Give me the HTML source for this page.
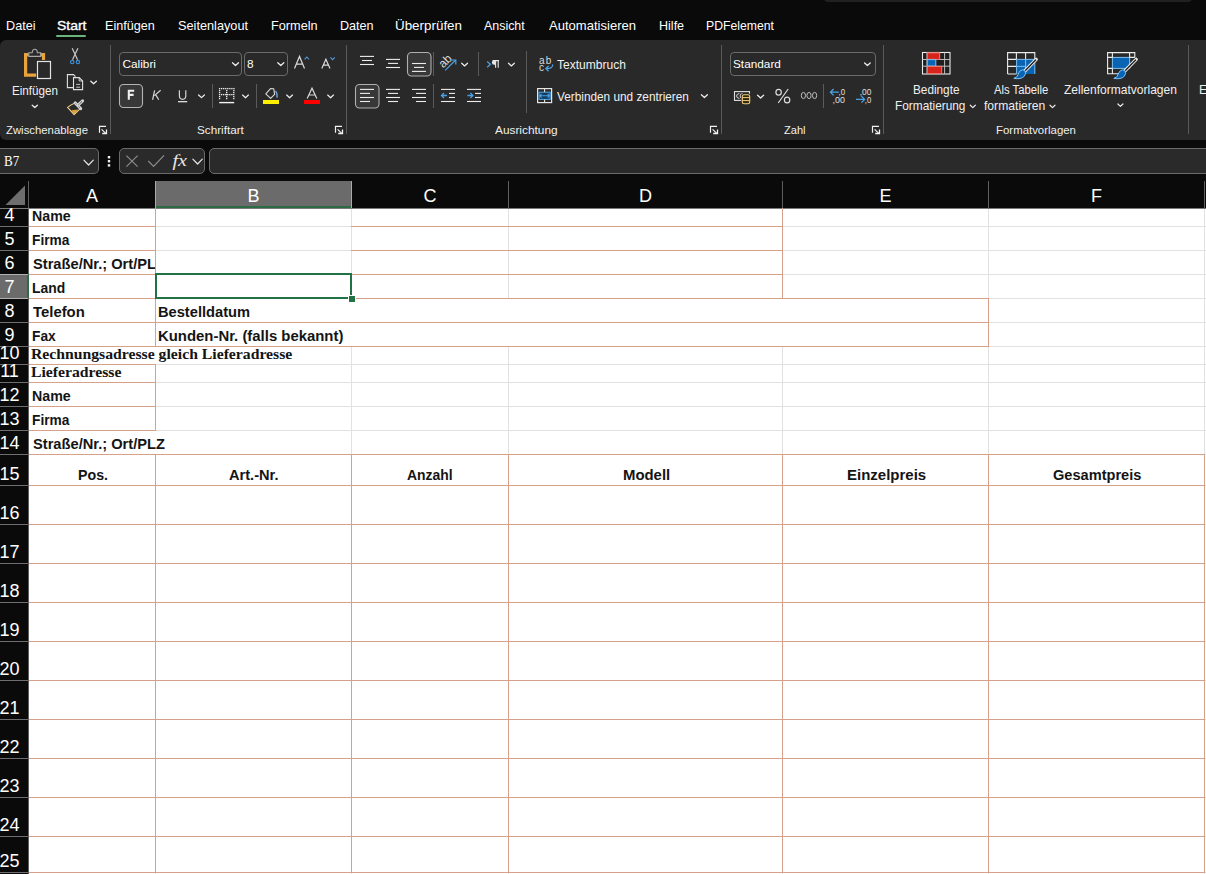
<!DOCTYPE html><html><head><meta charset="utf-8"><style>
html,body{margin:0;padding:0;}
body{width:1206px;height:874px;overflow:hidden;position:relative;background:#0a0a0a;font-family:"Liberation Sans",sans-serif;}
.t{position:absolute;white-space:nowrap;}
.r{position:absolute;}
svg.r{overflow:visible;}
</style></head><body>
<div class="r" style="left:824px;top:-10px;width:368px;height:12px;background:#212121;border-radius:4px;"></div>
<div class="t" style="left:5.50px;top:19.49px;font-size:13.00px;line-height:13.00px;color:#fff;font-family:'Liberation Sans',sans-serif;transform:scaleX(0.9720);transform-origin:0 0;">Datei</div>
<div class="t" style="left:56.50px;top:19.49px;font-size:13.00px;line-height:13.00px;color:#fff;font-family:'Liberation Sans',sans-serif;transform:scaleX(1.0745);transform-origin:0 0;-webkit-text-stroke:0.35px #fff;">Start</div>
<div class="t" style="left:105.00px;top:19.49px;font-size:13.00px;line-height:13.00px;color:#fff;font-family:'Liberation Sans',sans-serif;transform:scaleX(0.9684);transform-origin:0 0;">Einfügen</div>
<div class="t" style="left:178.00px;top:19.49px;font-size:13.00px;line-height:13.00px;color:#fff;font-family:'Liberation Sans',sans-serif;transform:scaleX(0.9783);transform-origin:0 0;">Seitenlayout</div>
<div class="t" style="left:271.00px;top:19.49px;font-size:13.00px;line-height:13.00px;color:#fff;font-family:'Liberation Sans',sans-serif;transform:scaleX(0.9774);transform-origin:0 0;">Formeln</div>
<div class="t" style="left:340.00px;top:19.49px;font-size:13.00px;line-height:13.00px;color:#fff;font-family:'Liberation Sans',sans-serif;transform:scaleX(0.9686);transform-origin:0 0;">Daten</div>
<div class="t" style="left:395.00px;top:19.49px;font-size:13.00px;line-height:13.00px;color:#fff;font-family:'Liberation Sans',sans-serif;transform:scaleX(1.0302);transform-origin:0 0;">Überprüfen</div>
<div class="t" style="left:484.00px;top:19.49px;font-size:13.00px;line-height:13.00px;color:#fff;font-family:'Liberation Sans',sans-serif;transform:scaleX(0.9547);transform-origin:0 0;">Ansicht</div>
<div class="t" style="left:549.00px;top:19.49px;font-size:13.00px;line-height:13.00px;color:#fff;font-family:'Liberation Sans',sans-serif;transform:scaleX(1.0033);transform-origin:0 0;">Automatisieren</div>
<div class="t" style="left:658.60px;top:19.49px;font-size:13.00px;line-height:13.00px;color:#fff;font-family:'Liberation Sans',sans-serif;transform:scaleX(0.9651);transform-origin:0 0;">Hilfe</div>
<div class="t" style="left:706.40px;top:19.49px;font-size:13.00px;line-height:13.00px;color:#fff;font-family:'Liberation Sans',sans-serif;transform:scaleX(0.9398);transform-origin:0 0;">PDFelement</div>
<div class="r" style="left:56px;top:35px;width:30px;height:2px;background:#6bb37f;border-radius:1px;"></div>
<div class="r" style="left:0px;top:40px;width:1206px;height:100px;background:#292929;border-radius:6px 0 0 6px;"></div>
<div class="r" style="left:110px;top:45px;width:1px;height:89px;background:#5a5a5a;"></div>
<div class="r" style="left:346px;top:45px;width:1px;height:89px;background:#5a5a5a;"></div>
<div class="r" style="left:721px;top:45px;width:1px;height:89px;background:#5a5a5a;"></div>
<div class="r" style="left:883px;top:45px;width:1px;height:89px;background:#5a5a5a;"></div>
<div class="r" style="left:1188px;top:45px;width:1px;height:89px;background:#5a5a5a;"></div>
<div class="t" style="left:6.00px;top:124.28px;font-size:11.60px;line-height:11.60px;color:#f0f0f0;font-family:'Liberation Sans',sans-serif;transform:scaleX(0.9782);transform-origin:0 0;">Zwischenablage</div>
<div class="t" style="left:197.00px;top:124.28px;font-size:11.60px;line-height:11.60px;color:#f0f0f0;font-family:'Liberation Sans',sans-serif;transform:scaleX(1.0084);transform-origin:0 0;">Schriftart</div>
<div class="t" style="left:494.90px;top:124.28px;font-size:11.60px;line-height:11.60px;color:#f0f0f0;font-family:'Liberation Sans',sans-serif;transform:scaleX(1.0219);transform-origin:0 0;">Ausrichtung</div>
<div class="t" style="left:784.00px;top:124.28px;font-size:11.60px;line-height:11.60px;color:#f0f0f0;font-family:'Liberation Sans',sans-serif;transform:scaleX(0.9572);transform-origin:0 0;">Zahl</div>
<div class="t" style="left:996.40px;top:124.28px;font-size:11.60px;line-height:11.60px;color:#f0f0f0;font-family:'Liberation Sans',sans-serif;transform:scaleX(0.9848);transform-origin:0 0;">Formatvorlagen</div>
<div class="r" style="left:119px;top:52px;width:121px;height:22px;background:transparent;border:1px solid #6a6a6a;border-radius:4px;"></div>
<div class="t" style="left:122.50px;top:58.51px;font-size:11.80px;line-height:11.80px;color:#fff;font-family:'Liberation Sans',sans-serif;">Calibri</div>
<div class="r" style="left:244px;top:52px;width:42px;height:22px;background:transparent;border:1px solid #6a6a6a;border-radius:4px;"></div>
<div class="t" style="left:247.00px;top:58.51px;font-size:11.80px;line-height:11.80px;color:#fff;font-family:'Liberation Sans',sans-serif;">8</div>
<div class="r" style="left:730px;top:52px;width:144px;height:22px;background:transparent;border:1px solid #6a6a6a;border-radius:4px;"></div>
<div class="t" style="left:733.00px;top:58.51px;font-size:11.80px;line-height:11.80px;color:#fff;font-family:'Liberation Sans',sans-serif;">Standard</div>
<div class="t" style="left:557.00px;top:58.70px;font-size:12.40px;line-height:12.40px;color:#f0f0f0;font-family:'Liberation Sans',sans-serif;transform:scaleX(0.9720);transform-origin:0 0;">Textumbruch</div>
<div class="t" style="left:557.00px;top:91.00px;font-size:12.40px;line-height:12.40px;color:#f0f0f0;font-family:'Liberation Sans',sans-serif;transform:scaleX(0.9526);transform-origin:0 0;">Verbinden und zentrieren</div>
<div class="t" style="left:11.50px;top:85.00px;font-size:12.40px;line-height:12.40px;color:#f0f0f0;font-family:'Liberation Sans',sans-serif;transform:scaleX(0.9397);transform-origin:0 0;">Einfügen</div>
<div class="t" style="left:912.60px;top:84.30px;font-size:12.40px;line-height:12.40px;color:#f0f0f0;font-family:'Liberation Sans',sans-serif;transform:scaleX(0.9499);transform-origin:0 0;">Bedingte</div>
<div class="t" style="left:894.90px;top:99.80px;font-size:12.40px;line-height:12.40px;color:#f0f0f0;font-family:'Liberation Sans',sans-serif;transform:scaleX(0.9561);transform-origin:0 0;">Formatierung</div>
<div class="t" style="left:993.60px;top:84.30px;font-size:12.40px;line-height:12.40px;color:#f0f0f0;font-family:'Liberation Sans',sans-serif;transform:scaleX(0.9089);transform-origin:0 0;">Als Tabelle</div>
<div class="t" style="left:984.40px;top:99.80px;font-size:12.40px;line-height:12.40px;color:#f0f0f0;font-family:'Liberation Sans',sans-serif;transform:scaleX(0.9790);transform-origin:0 0;">formatieren</div>
<div class="t" style="left:1064.00px;top:84.30px;font-size:12.40px;line-height:12.40px;color:#f0f0f0;font-family:'Liberation Sans',sans-serif;transform:scaleX(0.9701);transform-origin:0 0;">Zellenformatvorlagen</div>
<div class="t" style="left:1199.00px;top:84.30px;font-size:12.40px;line-height:12.40px;color:#f0f0f0;font-family:'Liberation Sans',sans-serif;">E</div>
<div class="r" style="left:0px;top:148px;width:99px;height:25px;background:#2a2a2a;border:1px solid #6a6a6a;border-left:none;border-radius:0 5px 5px 0;box-sizing:border-box;height:26px;"></div>
<div class="t" style="left:3.90px;top:152.80px;font-size:15.40px;line-height:15.40px;color:#fff;font-family:'Liberation Serif',serif;transform:scaleX(0.8458);transform-origin:0 0;">B7</div>
<div class="r" style="left:119px;top:148px;width:86px;height:26px;background:#2a2a2a;border:1px solid #6a6a6a;border-radius:5px;box-sizing:border-box;"></div>
<div class="r" style="left:209px;top:148px;width:1010px;height:26px;background:#2a2a2a;border:1px solid #6a6a6a;border-radius:5px;box-sizing:border-box;"></div>
<svg class="r" style="left:0px;top:0px" width="1206" height="874" viewBox="0 0 1206 874"><g transform="translate(20,44)"><path d="M8.6 10.6 H5.6 V31.2 H16.2" fill="none" stroke="#e9a33b" stroke-width="3.2"/><path d="M20.3 10.6 H23.5 V16" fill="none" stroke="#e9a33b" stroke-width="3.2"/><path d="M8.8 8.8 H12.2 Q12.4 5.3 14.8 5.3 Q17.2 5.3 17.4 8.8 H20.7 V12.4 H8.8 Z" fill="#292929" stroke="#a8a8a8" stroke-width="1.1"/><rect x="17.5" y="17.5" width="13" height="17" fill="#292929" stroke="#e4e4e4" stroke-width="1.2"/></g><path d="M32.20 105.20 L34.80 107.60 L37.40 105.20" fill="none" stroke="#ececec" stroke-width="1.30" stroke-linecap="round" stroke-linejoin="round"/><path d="M72.2 48.3 L77.6 59.8 M77.9 48.3 L72.5 59.8" stroke="#c8c8c8" stroke-width="1.2" fill="none"/><circle cx="72.2" cy="62" r="1.7" fill="none" stroke="#3d8fd6" stroke-width="1.15"/><circle cx="77.9" cy="62" r="1.7" fill="none" stroke="#3d8fd6" stroke-width="1.15"/><path d="M73 87.6 H67.4 V74.6 H73.5 L75.5 76.6" fill="none" stroke="#e0e0e0" stroke-width="1.1"/><path d="M73.5 77.6 H79.2 L82.6 81 V89.6 H73.5 Z" fill="#292929" stroke="#e0e0e0" stroke-width="1.1"/><path d="M79.2 77.6 V81 H82.6" fill="none" stroke="#e0e0e0" stroke-width="0.9"/><path d="M76.2 84.4 H80.2 M76.2 87.2 H80.2" stroke="#d8d8d8" stroke-width="0.9"/><path d="M90.80 81.20 L93.60 83.80 L96.40 81.20" fill="none" stroke="#ececec" stroke-width="1.30" stroke-linecap="round" stroke-linejoin="round"/><g transform="translate(62,96)"><path d="M9.3 14.3 L16.3 13.6 L12.2 18.2 Z" fill="#e2a134"/><path d="M5.6 11.3 Q9 8.4 13 6.9 L18.3 12.6 L12.1 18.7 Z" fill="none" stroke="#f3d38a" stroke-width="1.1" stroke-linejoin="round"/><path d="M13.3 7 L18.6 12.5" stroke="#d4d4d4" stroke-width="3.2" stroke-linecap="round"/><path d="M13.8 7.6 L18 12" stroke="#2a2a2a" stroke-width="1" stroke-dasharray="1.1 0.7"/><path d="M16 9.2 L20.6 4.8" stroke="#d4d4d4" stroke-width="3" stroke-linecap="round"/><path d="M16.6 8.6 L20.1 5.3" stroke="#2a2a2a" stroke-width="1" stroke-dasharray="1.1 0.7"/></g><path d="M99.5 132.8 V126.3 H106" fill="none" stroke="#f2f2f2" stroke-width="1.2"/><path d="M101.6 129.4 L106 133.6" stroke="#f2f2f2" stroke-width="1.2"/><path d="M106.5 129.6 V133.5 H102.2" fill="none" stroke="#f2f2f2" stroke-width="1.3"/><path d="M232.50 62.80 L235.50 65.60 L238.50 62.80" fill="none" stroke="#ececec" stroke-width="1.30" stroke-linecap="round" stroke-linejoin="round"/><path d="M277.80 62.80 L280.80 65.60 L283.80 62.80" fill="none" stroke="#ececec" stroke-width="1.30" stroke-linecap="round" stroke-linejoin="round"/><path d="M294.5 68.6 L299.5 56.4 L304.5 68.6 M296.4 64.2 H302.6" fill="none" stroke="#dadada" stroke-width="1.2"/><path d="M304.6 59.4 L306.8 57 L309 59.4" fill="none" stroke="#4f9ad8" stroke-width="1.1"/><path d="M321.8 68.6 L325.9 59.2 L330 68.6 M323.4 65.2 H328.4" fill="none" stroke="#dadada" stroke-width="1.2"/><path d="M330.4 57.3 L332.6 59.6 L334.8 57.3" fill="none" stroke="#4f9ad8" stroke-width="1.1"/><rect x="119.5" y="84.5" width="23" height="23" rx="4" fill="#383838" stroke="#b4b4b4" stroke-width="1.1"/><path d="M128.8 99.8 V90.8 H134.2 M128.8 94.9 H133.6" fill="none" stroke="#f0f0f0" stroke-width="2.1"/><path d="M154.6 90.3 L152.6 99.8 M160.6 90.3 L154.4 95.6 M155.6 94.6 L158.8 99.8" fill="none" stroke="#d8d8d8" stroke-width="1.2"/><path d="M179.4 90.2 V95.8 Q179.4 99.3 182.6 99.3 Q185.8 99.3 185.8 95.8 V90.2" fill="none" stroke="#d4d4d4" stroke-width="1.2"/><path d="M178 101.7 H187.2" stroke="#f0f0f0" stroke-width="1.2"/><path d="M198.60 94.95 L201.50 97.65 L204.40 94.95" fill="none" stroke="#ececec" stroke-width="1.25" stroke-linecap="round" stroke-linejoin="round"/><rect x="212" y="84" width="1" height="24" fill="#5a5a5a"/><rect x="218.95" y="87.95" width="1.3" height="1.3" fill="#f0f0f0"/><rect x="221.00" y="87.95" width="1.3" height="1.3" fill="#f0f0f0"/><rect x="223.05" y="87.95" width="1.3" height="1.3" fill="#f0f0f0"/><rect x="225.10" y="87.95" width="1.3" height="1.3" fill="#f0f0f0"/><rect x="227.15" y="87.95" width="1.3" height="1.3" fill="#f0f0f0"/><rect x="229.20" y="87.95" width="1.3" height="1.3" fill="#f0f0f0"/><rect x="231.25" y="87.95" width="1.3" height="1.3" fill="#f0f0f0"/><rect x="233.30" y="87.95" width="1.3" height="1.3" fill="#f0f0f0"/><rect x="218.95" y="89.95" width="1.3" height="1.3" fill="#f0f0f0"/><rect x="233.15" y="89.95" width="1.3" height="1.3" fill="#f0f0f0"/><rect x="226.05" y="89.95" width="1.3" height="1.3" fill="#f0f0f0"/><rect x="218.95" y="91.95" width="1.3" height="1.3" fill="#f0f0f0"/><rect x="233.15" y="91.95" width="1.3" height="1.3" fill="#f0f0f0"/><rect x="226.05" y="91.95" width="1.3" height="1.3" fill="#f0f0f0"/><rect x="218.95" y="93.95" width="1.3" height="1.3" fill="#f0f0f0"/><rect x="233.15" y="93.95" width="1.3" height="1.3" fill="#f0f0f0"/><rect x="226.05" y="93.95" width="1.3" height="1.3" fill="#f0f0f0"/><rect x="218.95" y="95.95" width="1.3" height="1.3" fill="#f0f0f0"/><rect x="233.15" y="95.95" width="1.3" height="1.3" fill="#f0f0f0"/><rect x="226.05" y="95.95" width="1.3" height="1.3" fill="#f0f0f0"/><rect x="218.95" y="97.95" width="1.3" height="1.3" fill="#f0f0f0"/><rect x="233.15" y="97.95" width="1.3" height="1.3" fill="#f0f0f0"/><rect x="226.05" y="97.95" width="1.3" height="1.3" fill="#f0f0f0"/><rect x="221.00" y="93.95" width="1.3" height="1.3" fill="#f0f0f0"/><rect x="223.05" y="93.95" width="1.3" height="1.3" fill="#f0f0f0"/><rect x="225.10" y="93.95" width="1.3" height="1.3" fill="#f0f0f0"/><rect x="227.15" y="93.95" width="1.3" height="1.3" fill="#f0f0f0"/><rect x="229.20" y="93.95" width="1.3" height="1.3" fill="#f0f0f0"/><rect x="231.25" y="93.95" width="1.3" height="1.3" fill="#f0f0f0"/><path d="M219.2 102.6 H234.2" stroke="#f2f2f2" stroke-width="1.4"/><path d="M242.60 95.05 L245.50 97.75 L248.40 95.05" fill="none" stroke="#ececec" stroke-width="1.25" stroke-linecap="round" stroke-linejoin="round"/><rect x="256" y="84" width="1" height="24" fill="#5a5a5a"/><path d="M265.8 93.8 L270.5 88.6 L273.8 88.8 L274.6 94.4 L270.6 98.4 Z" fill="none" stroke="#d8d8d8" stroke-width="1.1" stroke-linejoin="round"/><path d="M275.4 91 Q277.4 92.6 277 97.6" fill="none" stroke="#6fa8d8" stroke-width="1.5"/><rect x="263" y="100" width="16" height="4" fill="#ffee00"/><path d="M286.70 95.05 L289.60 97.75 L292.50 95.05" fill="none" stroke="#ececec" stroke-width="1.25" stroke-linecap="round" stroke-linejoin="round"/><path d="M307.2 98.6 L312 88.2 L316.8 98.6 M308.8 95 H315.2" fill="none" stroke="#dadada" stroke-width="1.2"/><rect x="304" y="100" width="16" height="4" fill="#ff0000"/><path d="M327.70 95.05 L330.60 97.75 L333.50 95.05" fill="none" stroke="#ececec" stroke-width="1.25" stroke-linecap="round" stroke-linejoin="round"/><path d="M335.5 132.8 V126.3 H342" fill="none" stroke="#f2f2f2" stroke-width="1.2"/><path d="M337.6 129.4 L342 133.6" stroke="#f2f2f2" stroke-width="1.2"/><path d="M342.5 129.6 V133.5 H338.2" fill="none" stroke="#f2f2f2" stroke-width="1.3"/><path d="M360.00 56.40 H374.00" stroke="#ececec" stroke-width="1.10"/><path d="M362.00 60.50 H372.00" stroke="#ececec" stroke-width="1.10"/><path d="M360.00 64.50 H374.00" stroke="#ececec" stroke-width="1.10"/><path d="M386.00 59.40 H400.00" stroke="#ececec" stroke-width="1.10"/><path d="M388.00 63.40 H398.00" stroke="#ececec" stroke-width="1.10"/><path d="M386.00 67.50 H400.00" stroke="#ececec" stroke-width="1.10"/><rect x="407.5" y="52.5" width="23.5" height="23.5" rx="4" fill="#383838" stroke="#b0b0b0" stroke-width="1.1"/><path d="M412.00 63.50 H426.00" stroke="#ececec" stroke-width="1.10"/><path d="M414.00 67.40 H424.00" stroke="#ececec" stroke-width="1.10"/><path d="M412.00 71.40 H426.00" stroke="#ececec" stroke-width="1.10"/><rect x="433" y="52" width="1" height="24" fill="#5a5a5a"/><text x="0" y="0" transform="translate(443.2,68.6) rotate(-45)" font-family="Liberation Sans" font-size="12" fill="#dcdcdc">ab</text><path d="M445.2 70.4 L455.6 60" stroke="#4ba0e4" stroke-width="1.2"/><path d="M451.2 60 H455.8 V64.6" fill="none" stroke="#4ba0e4" stroke-width="1.2"/><path d="M461.70 63.25 L464.60 65.95 L467.50 63.25" fill="none" stroke="#ececec" stroke-width="1.25" stroke-linecap="round" stroke-linejoin="round"/><rect x="478" y="52" width="1" height="24" fill="#5a5a5a"/><path d="M487.2 61.4 L490.4 64.3 L487.2 67.2" fill="none" stroke="#4ba0e4" stroke-width="1.3"/><path d="M495.6 60.4 V67.8 M498.2 60.4 V67.8 M492.6 60.6 H499" stroke="#e6e6e6" stroke-width="1.1"/><path d="M495.6 60.2 H494.2 A2.3 2.3 0 0 0 494.2 64.8 H495.6 Z" fill="#e6e6e6"/><path d="M508.50 63.25 L511.40 65.95 L514.30 63.25" fill="none" stroke="#ececec" stroke-width="1.25" stroke-linecap="round" stroke-linejoin="round"/><rect x="355.5" y="84.5" width="23.5" height="23.5" rx="4" fill="#383838" stroke="#b0b0b0" stroke-width="1.1"/><path d="M360.00 89.40 H374.00" stroke="#ececec" stroke-width="1.10"/><path d="M360.00 93.40 H370.00" stroke="#ececec" stroke-width="1.10"/><path d="M360.00 97.50 H374.00" stroke="#ececec" stroke-width="1.10"/><path d="M360.00 101.50 H370.00" stroke="#ececec" stroke-width="1.10"/><path d="M386.00 89.40 H400.00" stroke="#ececec" stroke-width="1.10"/><path d="M388.00 93.40 H398.00" stroke="#ececec" stroke-width="1.10"/><path d="M386.00 97.50 H400.00" stroke="#ececec" stroke-width="1.10"/><path d="M388.00 101.50 H398.00" stroke="#ececec" stroke-width="1.10"/><path d="M412.00 89.40 H426.00" stroke="#ececec" stroke-width="1.10"/><path d="M416.00 93.40 H426.00" stroke="#ececec" stroke-width="1.10"/><path d="M412.00 97.50 H426.00" stroke="#ececec" stroke-width="1.10"/><path d="M416.00 101.50 H426.00" stroke="#ececec" stroke-width="1.10"/><rect x="433" y="84" width="1" height="24" fill="#5a5a5a"/><path d="M441.00 89.40 H455.00" stroke="#ececec" stroke-width="1.10"/><path d="M441.00 101.50 H455.00" stroke="#ececec" stroke-width="1.10"/><path d="M449.00 93.40 H455.00" stroke="#ececec" stroke-width="1.10"/><path d="M449.00 97.50 H455.00" stroke="#ececec" stroke-width="1.10"/><path d="M447 95.5 H441.6 M444 93 L441.5 95.5 L444 98" fill="none" stroke="#4ba0e4" stroke-width="1.3"/><path d="M467.00 89.40 H481.00" stroke="#ececec" stroke-width="1.10"/><path d="M467.00 101.50 H481.00" stroke="#ececec" stroke-width="1.10"/><path d="M475.00 93.40 H481.00" stroke="#ececec" stroke-width="1.10"/><path d="M475.00 97.50 H481.00" stroke="#ececec" stroke-width="1.10"/><path d="M467.4 95.5 H472.8 M470.4 93 L472.9 95.5 L470.4 98" fill="none" stroke="#4ba0e4" stroke-width="1.3"/><rect x="526" y="51" width="1" height="62" fill="#5a5a5a"/><text x="539" y="63.8" font-family="Liberation Sans" font-size="10" fill="#dcdcdc" textLength="12.2" lengthAdjust="spacing">ab</text><text x="539" y="71" font-family="Liberation Sans" font-size="10" fill="#dcdcdc">c</text><path d="M552.6 64.4 Q553.4 68.4 546.4 68.6" fill="none" stroke="#4ba0e4" stroke-width="1.3"/><path d="M548.6 66 L545.8 68.6 L548.6 71.2" fill="none" stroke="#4ba0e4" stroke-width="1.3"/><rect x="537.6" y="88.6" width="14" height="14" fill="none" stroke="#e4e4e4" stroke-width="1.2"/><rect x="539" y="92.2" width="11.2" height="7.2" fill="#123b5c" stroke="#4ba0e4" stroke-width="1.1"/><path d="M544.6 88.6 V92 M544.6 99.6 V102.6" stroke="#e4e4e4" stroke-width="1.1"/><path d="M539.6 95.8 H549.6 M541.6 93.9 L539.6 95.8 L541.6 97.7 M547.6 93.9 L549.6 95.8 L547.6 97.7" fill="none" stroke="#4ba0e4" stroke-width="1.1"/><path d="M701.40 94.80 L704.40 97.60 L707.40 94.80" fill="none" stroke="#ececec" stroke-width="1.30" stroke-linecap="round" stroke-linejoin="round"/><path d="M710.5 132.8 V126.3 H717" fill="none" stroke="#f2f2f2" stroke-width="1.2"/><path d="M712.6 129.4 L717 133.6" stroke="#f2f2f2" stroke-width="1.2"/><path d="M717.5 129.6 V133.5 H713.2" fill="none" stroke="#f2f2f2" stroke-width="1.3"/><path d="M864.60 62.90 L867.40 65.50 L870.20 62.90" fill="none" stroke="#ececec" stroke-width="1.30" stroke-linecap="round" stroke-linejoin="round"/><rect x="734.5" y="91.6" width="15" height="8.8" fill="none" stroke="#e0e0e0" stroke-width="1.1"/><path d="M739.4 93.6 Q736.6 93.8 736.6 96 Q736.6 98.3 739.4 98.4 M742.6 93.6 Q740 93.8 740 96 Q740 98.3 742.6 98.4" fill="none" stroke="#e0e0e0" stroke-width="1"/><rect x="741.2" y="93.6" width="9.6" height="11.2" rx="2" fill="#292929"/><rect x="742.3" y="94.7" width="7.4" height="9" rx="1.8" fill="#2e2612" stroke="#f2cf78" stroke-width="1.1"/><path d="M742.6 97.6 H749.4 M742.6 100.6 H749.4" stroke="#f2cf78" stroke-width="1"/><path d="M757.60 95.20 L760.60 98.00 L763.60 95.20" fill="none" stroke="#ececec" stroke-width="1.30" stroke-linecap="round" stroke-linejoin="round"/><ellipse cx="778.6" cy="92.3" rx="2.7" ry="2.9" fill="none" stroke="#dcdcdc" stroke-width="1.2"/><ellipse cx="787.1" cy="100" rx="2.7" ry="2.9" fill="none" stroke="#dcdcdc" stroke-width="1.2"/><path d="M778.2 103 L788.2 89" stroke="#dcdcdc" stroke-width="1.2"/><ellipse cx="803.4" cy="95.5" rx="2.1" ry="3.1" fill="none" stroke="#bdbdbd" stroke-width="1"/><ellipse cx="809" cy="95.5" rx="2.1" ry="3.1" fill="none" stroke="#bdbdbd" stroke-width="1"/><ellipse cx="814.6" cy="95.5" rx="2.1" ry="3.1" fill="none" stroke="#bdbdbd" stroke-width="1"/><rect x="823" y="84" width="1" height="24" fill="#5a5a5a"/><path d="M838.8 92.2 H830.4 M833.6 89 L830.4 92.2 L833.6 95.4" fill="none" stroke="#4ba0e4" stroke-width="1.3"/><text x="838.6" y="95.2" font-family="Liberation Sans" font-size="9.6" fill="#e0e0e0" textLength="6.6" lengthAdjust="spacingAndGlyphs">,0</text><text x="832.6" y="103.2" font-family="Liberation Sans" font-size="9.6" fill="#e0e0e0" textLength="12.4" lengthAdjust="spacingAndGlyphs">,00</text><text x="859.8" y="95.2" font-family="Liberation Sans" font-size="9.6" fill="#e0e0e0" textLength="11.6" lengthAdjust="spacingAndGlyphs">,00</text><path d="M856 99.4 H864.6 M861.4 96.2 L864.6 99.4 L861.4 102.6" fill="none" stroke="#4ba0e4" stroke-width="1.3"/><text x="864.8" y="103.2" font-family="Liberation Sans" font-size="9.6" fill="#e0e0e0" textLength="6.4" lengthAdjust="spacingAndGlyphs">,0</text><path d="M872.5 132.8 V126.3 H879" fill="none" stroke="#f2f2f2" stroke-width="1.2"/><path d="M874.6 129.4 L879 133.6" stroke="#f2f2f2" stroke-width="1.2"/><path d="M879.5 129.6 V133.5 H875.2" fill="none" stroke="#f2f2f2" stroke-width="1.3"/><g transform="translate(922,52)"><rect x="0.5" y="0.5" width="27.5" height="21.5" fill="#1f1f1f" stroke="#ececec" stroke-width="1.1"/><path d="M5 0.5 V22 M22.6 0.5 V22 M0.5 7.5 H28 M0.5 14.2 H28" stroke="#bdbdbd" stroke-width="1"/><rect x="5.3" y="0.8" width="12.4" height="6.6" fill="#d7241a" stroke="#f07a72" stroke-width="1"/><rect x="5.3" y="7.6" width="8.5" height="6.4" fill="#0a64b4" stroke="#7cc0f4" stroke-width="1"/><rect x="5.3" y="14.4" width="14.4" height="7.2" fill="#d7241a" stroke="#f07a72" stroke-width="1"/></g><path d="M970.30 105.20 L972.80 107.60 L975.30 105.20" fill="none" stroke="#ececec" stroke-width="1.20" stroke-linecap="round" stroke-linejoin="round"/><path d="M1050.00 105.20 L1052.50 107.60 L1055.00 105.20" fill="none" stroke="#ececec" stroke-width="1.20" stroke-linecap="round" stroke-linejoin="round"/><g transform="translate(1007,52)"><rect x="9.6" y="7.4" width="18.2" height="14.6" fill="#0a64b4"/><path d="M0.6 22 V0.6 H27.8 V7.4 M0.6 7.4 H9.6 M0.6 14.4 H9.6 M9.4 0.6 V7.4 M18.6 0.6 V7.4 M0.6 22 H9.6" fill="none" stroke="#ececec" stroke-width="1.1"/><path d="M9.6 7.4 V22 M18.6 7.4 V22 M9.6 7.4 H27.8 V22 M9.6 14.4 H18.6" fill="none" stroke="#7cc0f4" stroke-width="1"/></g><g transform="translate(1007,52)"><path d="M29.2 7.4 L18 18.8" stroke="#e8e8e8" stroke-width="3.4" stroke-linecap="round"/><path d="M28.6 8 L18.6 18.2" stroke="#1e1e1e" stroke-width="1.3" stroke-linecap="round"/><path d="M17.8 18.6 Q19.8 21.2 17.2 24.4 Q13.8 27.6 6.8 26.4 Q10.6 25.2 11.2 22.2 Q12 18.6 15.4 17.8 Z" fill="#0a64b4" stroke="#7cc0f4" stroke-width="1"/></g><g transform="translate(1107,52)"><rect x="5.4" y="5.4" width="17.2" height="11" fill="#0a64b4" stroke="#7cc0f4" stroke-width="1"/><path d="M14 21.8 H0.6 V0.6 H27.8 V5.4 M0.6 5.4 H5.4 M22.6 5.4 H27.8 M5.4 0.6 V5.4 M22.6 0.6 V5.4 M0.6 16.4 H5.4 M5.4 16.4 V21.8" fill="none" stroke="#ececec" stroke-width="1.1"/></g><g transform="translate(1107,52)"><path d="M29.2 7.4 L18 18.8" stroke="#e8e8e8" stroke-width="3.4" stroke-linecap="round"/><path d="M28.6 8 L18.6 18.2" stroke="#1e1e1e" stroke-width="1.3" stroke-linecap="round"/><path d="M17.8 18.6 Q19.8 21.2 17.2 24.4 Q13.8 27.6 6.8 26.4 Q10.6 25.2 11.2 22.2 Q12 18.6 15.4 17.8 Z" fill="#0a64b4" stroke="#7cc0f4" stroke-width="1"/></g><path d="M1117.90 104.00 L1120.40 106.40 L1122.90 104.00" fill="none" stroke="#ececec" stroke-width="1.20" stroke-linecap="round" stroke-linejoin="round"/><path d="M83.90 160.20 L88.60 165.00 L93.30 160.20" fill="none" stroke="#e6e6e6" stroke-width="1.20" stroke-linecap="round" stroke-linejoin="round"/><rect x="107.8" y="156.0" width="2.4" height="2.4" fill="#f0f0f0"/><rect x="107.8" y="160.0" width="2.4" height="2.4" fill="#f0f0f0"/><rect x="107.8" y="164.2" width="2.4" height="2.4" fill="#f0f0f0"/><path d="M126.4 155.6 L137.6 166.6 M137.6 155.6 L126.4 166.6" stroke="#8c8c8c" stroke-width="1.2"/><path d="M148.2 161 L153.6 166.4 L164 155.4" fill="none" stroke="#8c8c8c" stroke-width="1.2"/><text x="172.4" y="166" font-family="Liberation Serif" font-style="italic" font-size="17" fill="#e8e8e8" textLength="14.6" lengthAdjust="spacingAndGlyphs">fx</text><path d="M192.90 159.20 L197.60 164.00 L202.30 159.20" fill="none" stroke="#e6e6e6" stroke-width="1.20" stroke-linecap="round" stroke-linejoin="round"/></svg>
<div class="r" style="left:0px;top:181px;width:1206px;height:27px;background:#0a0a0a;"></div>
<div class="r" style="left:156px;top:181px;width:195px;height:27px;background:#6b6b6b;"></div>
<div class="r" style="left:155px;top:181px;width:1px;height:27px;background:#aaaaaa;"></div>
<div class="r" style="left:351px;top:181px;width:1px;height:27px;background:#aaaaaa;"></div>
<div class="r" style="left:156px;top:206px;width:195px;height:2px;background:#2d6b45;"></div>
<div class="r" style="left:28px;top:181px;width:1px;height:27px;background:#5e5e5e;"></div>
<div class="r" style="left:508px;top:181px;width:1px;height:27px;background:#5e5e5e;"></div>
<div class="r" style="left:782px;top:181px;width:1px;height:27px;background:#5e5e5e;"></div>
<div class="r" style="left:988px;top:181px;width:1px;height:27px;background:#5e5e5e;"></div>
<div class="r" style="left:1204px;top:181px;width:1px;height:27px;background:#5e5e5e;"></div>
<div class="r" style="left:0px;top:208px;width:1206px;height:1px;background:#7a7a7a;"></div>
<div class="t" style="left:86.00px;top:187.26px;font-size:18.00px;line-height:18.00px;color:#fff;font-family:'Liberation Sans',sans-serif;">A</div>
<div class="t" style="left:247.50px;top:187.26px;font-size:18.00px;line-height:18.00px;color:#fff;font-family:'Liberation Sans',sans-serif;">B</div>
<div class="t" style="left:423.50px;top:187.26px;font-size:18.00px;line-height:18.00px;color:#fff;font-family:'Liberation Sans',sans-serif;">C</div>
<div class="t" style="left:639.00px;top:187.26px;font-size:18.00px;line-height:18.00px;color:#fff;font-family:'Liberation Sans',sans-serif;">D</div>
<div class="t" style="left:879.50px;top:187.26px;font-size:18.00px;line-height:18.00px;color:#fff;font-family:'Liberation Sans',sans-serif;">E</div>
<div class="t" style="left:1091.00px;top:187.26px;font-size:18.00px;line-height:18.00px;color:#fff;font-family:'Liberation Sans',sans-serif;">F</div>
<svg class="r" style="left:0px;top:181px" width="28" height="27" viewBox="0 0 28 27"><path d="M5.5 24 L25 4.5 L25 24 Z" fill="#6e6e6e"/></svg>
<div class="r" style="left:29px;top:209px;width:1177px;height:665px;background:#ffffff;"></div>
<div class="r" style="left:0px;top:209px;width:28px;height:665px;background:#0a0a0a;"></div>
<div class="r" style="left:28px;top:209px;width:1px;height:665px;background:#5e5e5e;"></div>
<div class="r" style="left:0px;top:226px;width:28px;height:1px;background:#6e6e6e;"></div>
<div class="r" style="left:0px;top:250px;width:28px;height:1px;background:#6e6e6e;"></div>
<div class="r" style="left:0px;top:274px;width:28px;height:1px;background:#6e6e6e;"></div>
<div class="r" style="left:0px;top:298px;width:28px;height:1px;background:#6e6e6e;"></div>
<div class="r" style="left:0px;top:322px;width:28px;height:1px;background:#6e6e6e;"></div>
<div class="r" style="left:0px;top:346px;width:28px;height:1px;background:#6e6e6e;"></div>
<div class="r" style="left:0px;top:364px;width:28px;height:1px;background:#6e6e6e;"></div>
<div class="r" style="left:0px;top:382px;width:28px;height:1px;background:#6e6e6e;"></div>
<div class="r" style="left:0px;top:406px;width:28px;height:1px;background:#6e6e6e;"></div>
<div class="r" style="left:0px;top:430px;width:28px;height:1px;background:#6e6e6e;"></div>
<div class="r" style="left:0px;top:454px;width:28px;height:1px;background:#6e6e6e;"></div>
<div class="r" style="left:0px;top:485px;width:28px;height:1px;background:#6e6e6e;"></div>
<div class="r" style="left:0px;top:524px;width:28px;height:1px;background:#6e6e6e;"></div>
<div class="r" style="left:0px;top:563px;width:28px;height:1px;background:#6e6e6e;"></div>
<div class="r" style="left:0px;top:602px;width:28px;height:1px;background:#6e6e6e;"></div>
<div class="r" style="left:0px;top:641px;width:28px;height:1px;background:#6e6e6e;"></div>
<div class="r" style="left:0px;top:680px;width:28px;height:1px;background:#6e6e6e;"></div>
<div class="r" style="left:0px;top:719px;width:28px;height:1px;background:#6e6e6e;"></div>
<div class="r" style="left:0px;top:758px;width:28px;height:1px;background:#6e6e6e;"></div>
<div class="r" style="left:0px;top:797px;width:28px;height:1px;background:#6e6e6e;"></div>
<div class="r" style="left:0px;top:836px;width:28px;height:1px;background:#6e6e6e;"></div>
<div class="r" style="left:0px;top:872px;width:28px;height:1px;background:#6e6e6e;"></div>
<div class="r" style="left:0px;top:275px;width:27px;height:23px;background:#6b6b6b;"></div>
<div class="r" style="left:0px;top:274px;width:28px;height:1px;background:#b0b0b0;"></div>
<div class="r" style="left:0px;top:298px;width:28px;height:1px;background:#b0b0b0;"></div>
<div class="r" style="left:27px;top:275px;width:2px;height:23px;background:#2d6b45;"></div>
<div class="t" style="left:4.49px;top:206.26px;font-size:18.00px;line-height:18.00px;color:#fff;font-family:'Liberation Sans',sans-serif;">4</div>
<div class="t" style="left:4.49px;top:230.26px;font-size:18.00px;line-height:18.00px;color:#fff;font-family:'Liberation Sans',sans-serif;">5</div>
<div class="t" style="left:4.49px;top:254.26px;font-size:18.00px;line-height:18.00px;color:#fff;font-family:'Liberation Sans',sans-serif;">6</div>
<div class="t" style="left:4.49px;top:278.26px;font-size:18.00px;line-height:18.00px;color:#fff;font-family:'Liberation Sans',sans-serif;">7</div>
<div class="t" style="left:4.49px;top:302.26px;font-size:18.00px;line-height:18.00px;color:#fff;font-family:'Liberation Sans',sans-serif;">8</div>
<div class="t" style="left:4.49px;top:326.26px;font-size:18.00px;line-height:18.00px;color:#fff;font-family:'Liberation Sans',sans-serif;">9</div>
<div class="t" style="left:-0.51px;top:344.26px;font-size:18.00px;line-height:18.00px;color:#fff;font-family:'Liberation Sans',sans-serif;">10</div>
<div class="t" style="left:0.16px;top:362.26px;font-size:18.00px;line-height:18.00px;color:#fff;font-family:'Liberation Sans',sans-serif;">11</div>
<div class="t" style="left:-0.51px;top:386.26px;font-size:18.00px;line-height:18.00px;color:#fff;font-family:'Liberation Sans',sans-serif;">12</div>
<div class="t" style="left:-0.51px;top:410.26px;font-size:18.00px;line-height:18.00px;color:#fff;font-family:'Liberation Sans',sans-serif;">13</div>
<div class="t" style="left:-0.51px;top:434.26px;font-size:18.00px;line-height:18.00px;color:#fff;font-family:'Liberation Sans',sans-serif;">14</div>
<div class="t" style="left:-0.51px;top:465.26px;font-size:18.00px;line-height:18.00px;color:#fff;font-family:'Liberation Sans',sans-serif;">15</div>
<div class="t" style="left:-0.51px;top:504.26px;font-size:18.00px;line-height:18.00px;color:#fff;font-family:'Liberation Sans',sans-serif;">16</div>
<div class="t" style="left:-0.51px;top:543.26px;font-size:18.00px;line-height:18.00px;color:#fff;font-family:'Liberation Sans',sans-serif;">17</div>
<div class="t" style="left:-0.51px;top:582.26px;font-size:18.00px;line-height:18.00px;color:#fff;font-family:'Liberation Sans',sans-serif;">18</div>
<div class="t" style="left:-0.51px;top:621.26px;font-size:18.00px;line-height:18.00px;color:#fff;font-family:'Liberation Sans',sans-serif;">19</div>
<div class="t" style="left:-0.51px;top:660.26px;font-size:18.00px;line-height:18.00px;color:#fff;font-family:'Liberation Sans',sans-serif;">20</div>
<div class="t" style="left:-0.51px;top:699.26px;font-size:18.00px;line-height:18.00px;color:#fff;font-family:'Liberation Sans',sans-serif;">21</div>
<div class="t" style="left:-0.51px;top:738.26px;font-size:18.00px;line-height:18.00px;color:#fff;font-family:'Liberation Sans',sans-serif;">22</div>
<div class="t" style="left:-0.51px;top:777.26px;font-size:18.00px;line-height:18.00px;color:#fff;font-family:'Liberation Sans',sans-serif;">23</div>
<div class="t" style="left:-0.51px;top:816.26px;font-size:18.00px;line-height:18.00px;color:#fff;font-family:'Liberation Sans',sans-serif;">24</div>
<div class="t" style="left:-0.51px;top:852.26px;font-size:18.00px;line-height:18.00px;color:#fff;font-family:'Liberation Sans',sans-serif;">25</div>
<div class="r" style="left:155px;top:209px;width:1px;height:665px;background:#e1e1e1;"></div>
<div class="r" style="left:351px;top:209px;width:1px;height:665px;background:#e1e1e1;"></div>
<div class="r" style="left:508px;top:209px;width:1px;height:665px;background:#e1e1e1;"></div>
<div class="r" style="left:782px;top:209px;width:1px;height:665px;background:#e1e1e1;"></div>
<div class="r" style="left:988px;top:209px;width:1px;height:665px;background:#e1e1e1;"></div>
<div class="r" style="left:1204px;top:209px;width:1px;height:665px;background:#e1e1e1;"></div>
<div class="r" style="left:29px;top:226px;width:1177px;height:1px;background:#e1e1e1;"></div>
<div class="r" style="left:29px;top:250px;width:1177px;height:1px;background:#e1e1e1;"></div>
<div class="r" style="left:29px;top:274px;width:1177px;height:1px;background:#e1e1e1;"></div>
<div class="r" style="left:29px;top:298px;width:1177px;height:1px;background:#e1e1e1;"></div>
<div class="r" style="left:29px;top:322px;width:1177px;height:1px;background:#e1e1e1;"></div>
<div class="r" style="left:29px;top:346px;width:1177px;height:1px;background:#e1e1e1;"></div>
<div class="r" style="left:29px;top:364px;width:1177px;height:1px;background:#e1e1e1;"></div>
<div class="r" style="left:29px;top:382px;width:1177px;height:1px;background:#e1e1e1;"></div>
<div class="r" style="left:29px;top:406px;width:1177px;height:1px;background:#e1e1e1;"></div>
<div class="r" style="left:29px;top:430px;width:1177px;height:1px;background:#e1e1e1;"></div>
<div class="r" style="left:29px;top:454px;width:1177px;height:1px;background:#e1e1e1;"></div>
<div class="r" style="left:29px;top:485px;width:1177px;height:1px;background:#e1e1e1;"></div>
<div class="r" style="left:29px;top:524px;width:1177px;height:1px;background:#e1e1e1;"></div>
<div class="r" style="left:29px;top:563px;width:1177px;height:1px;background:#e1e1e1;"></div>
<div class="r" style="left:29px;top:602px;width:1177px;height:1px;background:#e1e1e1;"></div>
<div class="r" style="left:29px;top:641px;width:1177px;height:1px;background:#e1e1e1;"></div>
<div class="r" style="left:29px;top:680px;width:1177px;height:1px;background:#e1e1e1;"></div>
<div class="r" style="left:29px;top:719px;width:1177px;height:1px;background:#e1e1e1;"></div>
<div class="r" style="left:29px;top:758px;width:1177px;height:1px;background:#e1e1e1;"></div>
<div class="r" style="left:29px;top:797px;width:1177px;height:1px;background:#e1e1e1;"></div>
<div class="r" style="left:29px;top:836px;width:1177px;height:1px;background:#e1e1e1;"></div>
<div class="r" style="left:29px;top:872px;width:1177px;height:1px;background:#e1e1e1;"></div>
<div class="r" style="left:29px;top:226px;width:127px;height:1px;background:#d5a18b;"></div>
<div class="r" style="left:155px;top:208px;width:1px;height:19px;background:#d5a18b;"></div>
<div class="r" style="left:351px;top:226px;width:432px;height:1px;background:#d5a18b;"></div>
<div class="r" style="left:782px;top:208px;width:1px;height:19px;background:#d5a18b;"></div>
<div class="r" style="left:29px;top:250px;width:127px;height:1px;background:#d5a18b;"></div>
<div class="r" style="left:155px;top:226px;width:1px;height:25px;background:#d5a18b;"></div>
<div class="r" style="left:351px;top:250px;width:432px;height:1px;background:#d5a18b;"></div>
<div class="r" style="left:782px;top:226px;width:1px;height:25px;background:#d5a18b;"></div>
<div class="r" style="left:29px;top:274px;width:127px;height:1px;background:#d5a18b;"></div>
<div class="r" style="left:155px;top:250px;width:1px;height:25px;background:#d5a18b;"></div>
<div class="r" style="left:351px;top:274px;width:432px;height:1px;background:#d5a18b;"></div>
<div class="r" style="left:782px;top:250px;width:1px;height:25px;background:#d5a18b;"></div>
<div class="r" style="left:29px;top:298px;width:127px;height:1px;background:#d5a18b;"></div>
<div class="r" style="left:155px;top:274px;width:1px;height:25px;background:#d5a18b;"></div>
<div class="r" style="left:351px;top:298px;width:432px;height:1px;background:#d5a18b;"></div>
<div class="r" style="left:782px;top:274px;width:1px;height:25px;background:#d5a18b;"></div>
<div class="r" style="left:29px;top:298px;width:960px;height:1px;background:#d5a18b;"></div>
<div class="r" style="left:29px;top:322px;width:960px;height:1px;background:#d5a18b;"></div>
<div class="r" style="left:155px;top:299px;width:1px;height:24px;background:#d5a18b;"></div>
<div class="r" style="left:988px;top:299px;width:1px;height:24px;background:#d5a18b;"></div>
<div class="r" style="left:29px;top:346px;width:960px;height:1px;background:#d5a18b;"></div>
<div class="r" style="left:155px;top:323px;width:1px;height:24px;background:#d5a18b;"></div>
<div class="r" style="left:988px;top:323px;width:1px;height:24px;background:#d5a18b;"></div>
<div class="r" style="left:29px;top:364px;width:127px;height:1px;background:#d5a18b;"></div>
<div class="r" style="left:29px;top:382px;width:127px;height:1px;background:#d5a18b;"></div>
<div class="r" style="left:155px;top:365px;width:1px;height:18px;background:#d5a18b;"></div>
<div class="r" style="left:29px;top:406px;width:127px;height:1px;background:#d5a18b;"></div>
<div class="r" style="left:155px;top:383px;width:1px;height:24px;background:#d5a18b;"></div>
<div class="r" style="left:29px;top:430px;width:127px;height:1px;background:#d5a18b;"></div>
<div class="r" style="left:155px;top:407px;width:1px;height:24px;background:#d5a18b;"></div>
<div class="r" style="left:29px;top:454px;width:1176px;height:1px;background:#d5a18b;"></div>
<div class="r" style="left:29px;top:485px;width:1176px;height:1px;background:#d5a18b;"></div>
<div class="r" style="left:155px;top:455px;width:1px;height:31px;background:#d5a18b;"></div>
<div class="r" style="left:351px;top:455px;width:1px;height:31px;background:#d5a18b;"></div>
<div class="r" style="left:508px;top:455px;width:1px;height:31px;background:#d5a18b;"></div>
<div class="r" style="left:782px;top:455px;width:1px;height:31px;background:#d5a18b;"></div>
<div class="r" style="left:988px;top:455px;width:1px;height:31px;background:#d5a18b;"></div>
<div class="r" style="left:1204px;top:455px;width:1px;height:31px;background:#d5a18b;"></div>
<div class="r" style="left:29px;top:524px;width:1176px;height:1px;background:#d5a18b;"></div>
<div class="r" style="left:155px;top:486px;width:1px;height:39px;background:#d5a18b;"></div>
<div class="r" style="left:351px;top:486px;width:1px;height:39px;background:#d5a18b;"></div>
<div class="r" style="left:508px;top:486px;width:1px;height:39px;background:#d5a18b;"></div>
<div class="r" style="left:782px;top:486px;width:1px;height:39px;background:#d5a18b;"></div>
<div class="r" style="left:988px;top:486px;width:1px;height:39px;background:#d5a18b;"></div>
<div class="r" style="left:1204px;top:486px;width:1px;height:39px;background:#d5a18b;"></div>
<div class="r" style="left:29px;top:563px;width:1176px;height:1px;background:#d5a18b;"></div>
<div class="r" style="left:155px;top:525px;width:1px;height:39px;background:#d5a18b;"></div>
<div class="r" style="left:351px;top:525px;width:1px;height:39px;background:#d5a18b;"></div>
<div class="r" style="left:508px;top:525px;width:1px;height:39px;background:#d5a18b;"></div>
<div class="r" style="left:782px;top:525px;width:1px;height:39px;background:#d5a18b;"></div>
<div class="r" style="left:988px;top:525px;width:1px;height:39px;background:#d5a18b;"></div>
<div class="r" style="left:1204px;top:525px;width:1px;height:39px;background:#d5a18b;"></div>
<div class="r" style="left:29px;top:602px;width:1176px;height:1px;background:#d5a18b;"></div>
<div class="r" style="left:155px;top:564px;width:1px;height:39px;background:#d5a18b;"></div>
<div class="r" style="left:351px;top:564px;width:1px;height:39px;background:#d5a18b;"></div>
<div class="r" style="left:508px;top:564px;width:1px;height:39px;background:#d5a18b;"></div>
<div class="r" style="left:782px;top:564px;width:1px;height:39px;background:#d5a18b;"></div>
<div class="r" style="left:988px;top:564px;width:1px;height:39px;background:#d5a18b;"></div>
<div class="r" style="left:1204px;top:564px;width:1px;height:39px;background:#d5a18b;"></div>
<div class="r" style="left:29px;top:641px;width:1176px;height:1px;background:#d5a18b;"></div>
<div class="r" style="left:155px;top:603px;width:1px;height:39px;background:#d5a18b;"></div>
<div class="r" style="left:351px;top:603px;width:1px;height:39px;background:#d5a18b;"></div>
<div class="r" style="left:508px;top:603px;width:1px;height:39px;background:#d5a18b;"></div>
<div class="r" style="left:782px;top:603px;width:1px;height:39px;background:#d5a18b;"></div>
<div class="r" style="left:988px;top:603px;width:1px;height:39px;background:#d5a18b;"></div>
<div class="r" style="left:1204px;top:603px;width:1px;height:39px;background:#d5a18b;"></div>
<div class="r" style="left:29px;top:680px;width:1176px;height:1px;background:#d5a18b;"></div>
<div class="r" style="left:155px;top:642px;width:1px;height:39px;background:#d5a18b;"></div>
<div class="r" style="left:351px;top:642px;width:1px;height:39px;background:#d5a18b;"></div>
<div class="r" style="left:508px;top:642px;width:1px;height:39px;background:#d5a18b;"></div>
<div class="r" style="left:782px;top:642px;width:1px;height:39px;background:#d5a18b;"></div>
<div class="r" style="left:988px;top:642px;width:1px;height:39px;background:#d5a18b;"></div>
<div class="r" style="left:1204px;top:642px;width:1px;height:39px;background:#d5a18b;"></div>
<div class="r" style="left:29px;top:719px;width:1176px;height:1px;background:#d5a18b;"></div>
<div class="r" style="left:155px;top:681px;width:1px;height:39px;background:#d5a18b;"></div>
<div class="r" style="left:351px;top:681px;width:1px;height:39px;background:#d5a18b;"></div>
<div class="r" style="left:508px;top:681px;width:1px;height:39px;background:#d5a18b;"></div>
<div class="r" style="left:782px;top:681px;width:1px;height:39px;background:#d5a18b;"></div>
<div class="r" style="left:988px;top:681px;width:1px;height:39px;background:#d5a18b;"></div>
<div class="r" style="left:1204px;top:681px;width:1px;height:39px;background:#d5a18b;"></div>
<div class="r" style="left:29px;top:758px;width:1176px;height:1px;background:#d5a18b;"></div>
<div class="r" style="left:155px;top:720px;width:1px;height:39px;background:#d5a18b;"></div>
<div class="r" style="left:351px;top:720px;width:1px;height:39px;background:#d5a18b;"></div>
<div class="r" style="left:508px;top:720px;width:1px;height:39px;background:#d5a18b;"></div>
<div class="r" style="left:782px;top:720px;width:1px;height:39px;background:#d5a18b;"></div>
<div class="r" style="left:988px;top:720px;width:1px;height:39px;background:#d5a18b;"></div>
<div class="r" style="left:1204px;top:720px;width:1px;height:39px;background:#d5a18b;"></div>
<div class="r" style="left:29px;top:797px;width:1176px;height:1px;background:#d5a18b;"></div>
<div class="r" style="left:155px;top:759px;width:1px;height:39px;background:#d5a18b;"></div>
<div class="r" style="left:351px;top:759px;width:1px;height:39px;background:#d5a18b;"></div>
<div class="r" style="left:508px;top:759px;width:1px;height:39px;background:#d5a18b;"></div>
<div class="r" style="left:782px;top:759px;width:1px;height:39px;background:#d5a18b;"></div>
<div class="r" style="left:988px;top:759px;width:1px;height:39px;background:#d5a18b;"></div>
<div class="r" style="left:1204px;top:759px;width:1px;height:39px;background:#d5a18b;"></div>
<div class="r" style="left:29px;top:836px;width:1176px;height:1px;background:#d5a18b;"></div>
<div class="r" style="left:155px;top:798px;width:1px;height:39px;background:#d5a18b;"></div>
<div class="r" style="left:351px;top:798px;width:1px;height:39px;background:#d5a18b;"></div>
<div class="r" style="left:508px;top:798px;width:1px;height:39px;background:#d5a18b;"></div>
<div class="r" style="left:782px;top:798px;width:1px;height:39px;background:#d5a18b;"></div>
<div class="r" style="left:988px;top:798px;width:1px;height:39px;background:#d5a18b;"></div>
<div class="r" style="left:1204px;top:798px;width:1px;height:39px;background:#d5a18b;"></div>
<div class="r" style="left:29px;top:872px;width:1176px;height:1px;background:#d5a18b;"></div>
<div class="r" style="left:155px;top:837px;width:1px;height:36px;background:#d5a18b;"></div>
<div class="r" style="left:351px;top:837px;width:1px;height:36px;background:#d5a18b;"></div>
<div class="r" style="left:508px;top:837px;width:1px;height:36px;background:#d5a18b;"></div>
<div class="r" style="left:782px;top:837px;width:1px;height:36px;background:#d5a18b;"></div>
<div class="r" style="left:988px;top:837px;width:1px;height:36px;background:#d5a18b;"></div>
<div class="r" style="left:1204px;top:837px;width:1px;height:36px;background:#d5a18b;"></div>
<div class="r" style="left:156px;top:299px;width:832px;height:23px;background:#fff;"></div>
<div class="r" style="left:156px;top:323px;width:832px;height:23px;background:#fff;"></div>
<div class="r" style="left:155px;top:347px;width:1px;height:17px;background:#fff;"></div>
<div class="r" style="left:155px;top:431px;width:1px;height:23px;background:#fff;"></div>
<div class="t" style="left:31.60px;top:208.25px;font-size:15.30px;line-height:15.30px;color:#141414;font-family:'Liberation Sans',sans-serif;font-weight:bold;transform:scaleX(0.9287);transform-origin:0 0;">Name</div>
<div class="t" style="left:31.80px;top:232.25px;font-size:15.30px;line-height:15.30px;color:#141414;font-family:'Liberation Sans',sans-serif;font-weight:bold;transform:scaleX(0.8977);transform-origin:0 0;">Firma</div>
<div class="r" style="left:29px;top:251px;width:126px;height:23px;overflow:hidden">
<div class="t" style="left:3.70px;top:5.25px;font-size:15.30px;line-height:15.30px;color:#141414;font-family:'Liberation Sans',sans-serif;font-weight:bold;transform:scaleX(0.9584);transform-origin:0 0;">Straße/Nr.; Ort/PLZ</div>
</div>
<div class="t" style="left:31.80px;top:280.25px;font-size:15.30px;line-height:15.30px;color:#141414;font-family:'Liberation Sans',sans-serif;font-weight:bold;transform:scaleX(0.9084);transform-origin:0 0;">Land</div>
<div class="t" style="left:33.00px;top:304.25px;font-size:15.30px;line-height:15.30px;color:#141414;font-family:'Liberation Sans',sans-serif;font-weight:bold;transform:scaleX(0.9725);transform-origin:0 0;">Telefon</div>
<div class="t" style="left:158.30px;top:304.25px;font-size:15.30px;line-height:15.30px;color:#141414;font-family:'Liberation Sans',sans-serif;font-weight:bold;transform:scaleX(0.9576);transform-origin:0 0;">Bestelldatum</div>
<div class="t" style="left:31.80px;top:328.25px;font-size:15.30px;line-height:15.30px;color:#141414;font-family:'Liberation Sans',sans-serif;font-weight:bold;transform:scaleX(0.8989);transform-origin:0 0;">Fax</div>
<div class="t" style="left:158.30px;top:328.25px;font-size:15.30px;line-height:15.30px;color:#141414;font-family:'Liberation Sans',sans-serif;font-weight:bold;transform:scaleX(0.9737);transform-origin:0 0;">Kunden-Nr. (falls bekannt)</div>
<div class="t" style="left:30.80px;top:347.21px;font-size:14.20px;line-height:14.20px;color:#141414;font-family:'Liberation Serif',serif;font-weight:bold;transform:scaleX(1.1075);transform-origin:0 0;">Rechnungsadresse gleich Lieferadresse</div>
<div class="t" style="left:30.80px;top:365.01px;font-size:14.20px;line-height:14.20px;color:#141414;font-family:'Liberation Serif',serif;font-weight:bold;transform:scaleX(1.1070);transform-origin:0 0;">Lieferadresse</div>
<div class="t" style="left:31.60px;top:388.25px;font-size:15.30px;line-height:15.30px;color:#141414;font-family:'Liberation Sans',sans-serif;font-weight:bold;transform:scaleX(0.9287);transform-origin:0 0;">Name</div>
<div class="t" style="left:31.80px;top:412.25px;font-size:15.30px;line-height:15.30px;color:#141414;font-family:'Liberation Sans',sans-serif;font-weight:bold;transform:scaleX(0.8977);transform-origin:0 0;">Firma</div>
<div class="t" style="left:32.70px;top:436.25px;font-size:15.30px;line-height:15.30px;color:#141414;font-family:'Liberation Sans',sans-serif;font-weight:bold;transform:scaleX(0.9584);transform-origin:0 0;">Straße/Nr.; Ort/PLZ</div>
<div class="t" style="left:77.50px;top:467.25px;font-size:15.30px;line-height:15.30px;color:#141414;font-family:'Liberation Sans',sans-serif;font-weight:bold;transform:scaleX(0.9285);transform-origin:0 0;">Pos.</div>
<div class="t" style="left:229.00px;top:467.25px;font-size:15.30px;line-height:15.30px;color:#141414;font-family:'Liberation Sans',sans-serif;font-weight:bold;transform:scaleX(0.9546);transform-origin:0 0;">Art.-Nr.</div>
<div class="t" style="left:407.30px;top:467.25px;font-size:15.30px;line-height:15.30px;color:#141414;font-family:'Liberation Sans',sans-serif;font-weight:bold;transform:scaleX(0.9112);transform-origin:0 0;">Anzahl</div>
<div class="t" style="left:622.50px;top:467.25px;font-size:15.30px;line-height:15.30px;color:#141414;font-family:'Liberation Sans',sans-serif;font-weight:bold;transform:scaleX(0.9742);transform-origin:0 0;">Modell</div>
<div class="t" style="left:846.60px;top:467.25px;font-size:15.30px;line-height:15.30px;color:#141414;font-family:'Liberation Sans',sans-serif;font-weight:bold;transform:scaleX(0.9804);transform-origin:0 0;">Einzelpreis</div>
<div class="t" style="left:1052.90px;top:467.25px;font-size:15.30px;line-height:15.30px;color:#141414;font-family:'Liberation Sans',sans-serif;font-weight:bold;transform:scaleX(0.9536);transform-origin:0 0;">Gesamtpreis</div>
<div class="r" style="left:155px;top:273px;width:197px;height:2px;background:#217346;"></div>
<div class="r" style="left:155px;top:297px;width:197px;height:2px;background:#217346;"></div>
<div class="r" style="left:155px;top:273px;width:2px;height:26px;background:#217346;"></div>
<div class="r" style="left:350px;top:273px;width:2px;height:26px;background:#217346;"></div>
<div class="r" style="left:349px;top:296px;width:6px;height:6px;background:#217346;box-shadow:0 0 0 1px #fff;"></div>
</body></html>
